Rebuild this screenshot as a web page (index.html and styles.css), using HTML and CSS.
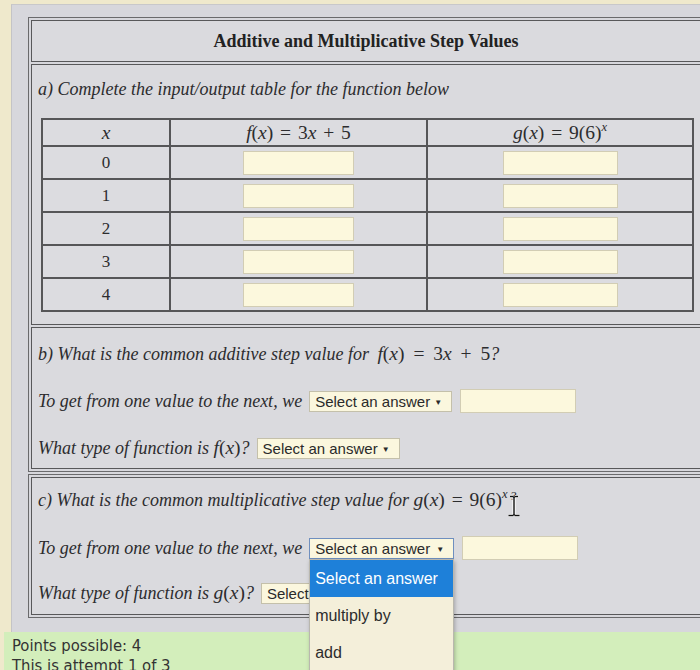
FILE: index.html
```html
<!DOCTYPE html>
<html>
<head>
<meta charset="utf-8">
<title>Additive and Multiplicative Step Values</title>
<link rel="stylesheet" href="styles.css">
</head>
<body>
<div class="panel">
  <div class="qtable">
    <div class="cell title">Additive and Multiplicative Step Values</div>
    <div class="cell sec-a">
      <p class="prompt">a) Complete the input/output table for the function below</p>
      <table class="io">
        <thead>
          <tr>
            <th class="col-x"><span class="m"><i>x</i></span></th>
            <th class="col-f"><span class="m"><i>f</i>(<i>x</i>) = 3<i>x</i> + 5</span></th>
            <th class="col-g"><span class="m"><i>g</i>(<i>x</i>) = 9(6)<sup><i>x</i></sup></span></th>
          </tr>
        </thead>
        <tbody>
          <tr><td class="num">0</td><td><span class="ans in-f"></span></td><td><span class="ans in-g"></span></td></tr>
          <tr><td class="num">1</td><td><span class="ans in-f"></span></td><td><span class="ans in-g"></span></td></tr>
          <tr><td class="num">2</td><td><span class="ans in-f"></span></td><td><span class="ans in-g"></span></td></tr>
          <tr><td class="num">3</td><td><span class="ans in-f"></span></td><td><span class="ans in-g"></span></td></tr>
          <tr><td class="num">4</td><td><span class="ans in-f"></span></td><td><span class="ans in-g"></span></td></tr>
        </tbody>
      </table>
    </div>
    <div class="cell sec-b">
      <div class="line first">b) What is the common additive step value for&nbsp;<span class="m wide-m"><i>f</i>(<i>x</i>) = 3<i>x</i> + 5</span>?</div>
      <div class="line">To get from one value to the next, we <span class="sel">Select an answer<span class="arrow">▼</span></span><span class="ans wide"></span></div>
      <div class="line">What type of function is&nbsp;<span class="m"><i>f</i>(<i>x</i>)</span>? <span class="sel">Select an answer<span class="arrow">▼</span></span></div>
    </div>
  </div>
  <div class="qtable second">
    <div class="cell sec-c">
      <div class="line first">c) What is the common multiplicative step value for&nbsp;<span class="m"><i>g</i>(<i>x</i>) = 9(6)<sup><i>x</i></sup></span><span class="qmark">?<svg class="ibeam" width="14" height="22" viewBox="0 0 14 22"><path d="M3 1.5h3.2M7.8 1.5H11M7 2v18M1.5 20.5h4.7M7.8 20.5h4.7" stroke="#fff" stroke-width="3.2" fill="none"/><path d="M3 1.5h3.2M7.8 1.5H11M7 2v18M1.5 20.5h4.7M7.8 20.5h4.7" stroke="#111" stroke-width="1.4" fill="none"/><path d="M6 2.2Q7 1.6 8 2.2M6 19.8Q7 20.4 8 19.8" stroke="#111" stroke-width="1.2" fill="none"/></svg></span></div>
      <div class="line l2">To get from one value to the next, we <span class="selwrap"><span class="sel focus">Select an answer<span class="arrow">▼</span></span><span class="menu"><span class="opt hl">Select an answer</span><span class="opt">multiply by</span><span class="opt">add</span></span></span><span class="ans wide"></span></div>
      <div class="line l3">What type of function is&nbsp;<span class="m"><i>g</i>(<i>x</i>)</span>? <span class="sel">Select an answer<span class="arrow">▼</span></span></div>
    </div>
  </div>
  <div class="points">Points possible: 4<br>This is attempt 1 of 3</div>
</div>
</body>
</html>
```
FILE: styles.css
```css
html, body {
  margin: 0;
  padding: 0;
  overflow: hidden;
  height: 670px;
}
body {
  background: #efe9cc;
  color: #2c2c2e;
  font-family: "Liberation Serif", "Times New Roman", serif;
}
.panel {
  margin: 4px 0 0 11px;
  padding: 12px 0 0 16px;
  background: #d7d7dc;
  border-left: 1px solid #c4c4c6;
  border-top: 1px solid #c8c8ca;
  height: 700px;
}
.qtable {
  width: 670px;
  border: 1px solid #6a6a6c;
  padding: 2px;
  display: flex;
  flex-direction: column;
  gap: 2px;
}
.qtable.second {
  margin-top: 2px;
}
.cell {
  border: 1px solid #58585a;
  background: #dadade;
}
.title {
  height: 40px;
  line-height: 40px;
  text-align: center;
  font-weight: bold;
  font-size: 18px;
  color: #222;
}
.sec-a {
  padding: 13px 7px 12px 6px;
}
.prompt {
  margin: 0;
  line-height: 22px;
  font-style: italic;
  font-size: 18px;
}
.m {
  font-family: "Liberation Serif", "Times New Roman", serif;
  font-style: normal;
  font-size: 19.5px;
  word-spacing: 2px;
}
.m.wide-m {
  margin-left: 4px;
  word-spacing: 4px;
}
.m i {
  font-style: italic;
}
.m sup {
  font-size: 12.5px;
  vertical-align: 8px;
  line-height: 0;
}
.io {
  margin-top: 18px;
  margin-left: 3px;
  width: 653px;
  border-collapse: collapse;
  border: 2px solid #565658;
}
.io th, .io td {
  border: 2px solid #565658;
  padding: 0;
  text-align: center;
  font-weight: normal;
  background: #dcdce0;
}
.io th {
  height: 25px;
}
.io td {
  height: 31px;
}
.col-x { width: 126px; }
.col-f { width: 255px; }
.num {
  font-size: 17px;
}
.ans {
  display: inline-block;
  box-sizing: border-box;
  height: 24px;
  background: #fcf8dd;
  border: 1px solid #d2cdb4;
  vertical-align: middle;
}
.in-f { width: 111px; display: block; margin: 0 auto; }
.in-g { width: 115px; display: block; margin: 0 auto; }
.ans.wide { width: 116px; margin-left: 8px; }
.sec-b {
  padding: 15px 0 9px 6px;
}
.sec-c {
  padding: 11px 0 10px 6px;
}
.line {
  height: 22px;
  display: flex;
  align-items: center;
  white-space: nowrap;
  font-style: italic;
  font-size: 18px;
  margin-top: 25px;
}
.line.first { margin-top: 0; }
.sec-c .l2 { margin-top: 26px; }
.sec-c .l3 { margin-top: 23px; }
.sel {
  display: inline-flex;
  align-items: center;
  box-sizing: border-box;
  width: 143px;
  height: 21px;
  margin-left: 7px;
  padding-left: 5px;
  background: #fbf7de;
  border: 1px solid #c4c0aa;
  font-family: "Liberation Sans", Arial, sans-serif;
  font-style: normal;
  font-size: 15px;
  color: #2a2a2a;
  position: relative;
}
.arrow {
  font-size: 8px;
  position: absolute;
  right: 9px;
  top: 6px;
}
.sel.focus {
  width: 145px;
  margin-left: 0;
  border-color: #6f8fbf;
}
.selwrap {
  position: relative;
  display: inline-flex;
  margin-left: 7px;
}
.menu {
  position: absolute;
  left: 0;
  top: 21px;
  width: 145px;
  box-sizing: border-box;
  background: #f4efda;
  border: 1px solid #b9b7ae;
  box-shadow: 1px 2px 4px rgba(0,0,0,0.25);
  display: flex;
  flex-direction: column;
  z-index: 10;
}
.opt {
  height: 37px;
  line-height: 37px;
  padding-left: 5px;
  font-family: "Liberation Sans", Arial, sans-serif;
  font-style: normal;
  font-size: 16px;
  color: #2c2c2c;
}
.opt.hl {
  background: #1e80d9;
  color: #fff;
}
.qmark {
  position: relative;
  margin-left: 2px;
  font-size: 13px;
  align-self: flex-start;
  line-height: 14px;
}
.ibeam {
  position: absolute;
  left: -3px;
  top: 6px;
}
.points {
  margin: 14px 0 0 -24px;
  padding: 4px 0 0 8px;
  height: 60px;
  background: #d3eebb;
  font-family: "DejaVu Sans Condensed", "DejaVu Sans", sans-serif;
  font-stretch: condensed;
  font-size: 16.5px;
  line-height: 20px;
  color: #333;
}
```
